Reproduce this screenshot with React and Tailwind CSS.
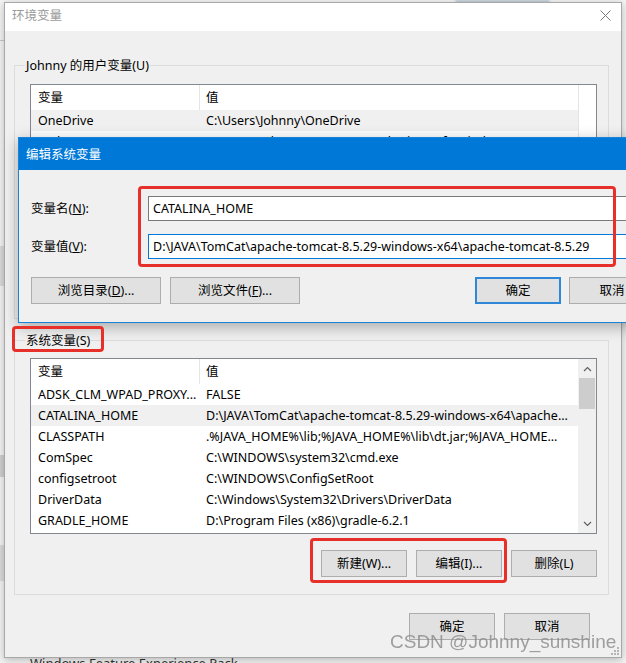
import React from "react";

const sysRows = [
  ["ADSK_CLM_WPAD_PROXY...", "FALSE"],
  ["CATALINA_HOME", "D:\\JAVA\\TomCat\\apache-tomcat-8.5.29-windows-x64\\apache..."],
  ["CLASSPATH", ".%JAVA_HOME%\\lib;%JAVA_HOME%\\lib\\dt.jar;%JAVA_HOME..."],
  ["ComSpec", "C:\\WINDOWS\\system32\\cmd.exe"],
  ["configsetroot", "C:\\WINDOWS\\ConfigSetRoot"],
  ["DriverData", "C:\\Windows\\System32\\Drivers\\DriverData"],
  ["GRADLE_HOME", "D:\\Program Files (x86)\\gradle-6.2.1"],
];

const userRows = [
  ["OneDrive", "C:\\Users\\Johnny\\OneDrive"],
  ["Path", "C:\\Users\\Johnny\\AppData\\Local\\Microsoft\\WindowsApps;C:\\..."],
  ["TEMP", "C:\\Users\\Johnny\\AppData\\Local\\Temp"],
  ["TMP", "C:\\Users\\Johnny\\AppData\\Local\\Temp"],
];

const Chevron = ({ down }) => (
  <svg width="9" height="6" viewBox="0 0 9 6" className={down ? "rotate-180" : ""}>
    <path d="M1 5 4.5 1.5 8 5" fill="none" stroke="#606060" strokeWidth="1.2" />
  </svg>
);

const Btn = ({ children, primary, className = "" }) => (
  <div
    className={`flex h-[27px] w-[86px] items-center justify-center bg-[#e1e1e1] text-[12.5px] text-black ${
      primary ? "border-2 border-[#2f87d8]" : "border border-[#adadad]"
    } ${className}`}
  >
    {children}
  </div>
);

const VarList = ({ rows, selected, heightClass, scroll }) => (
  <div className={`flex overflow-hidden border border-[#828790] bg-white ${heightClass}`}>
    <div className="flex min-w-0 flex-1 flex-col">
      <div className="flex h-[25px] shrink-0 items-center">
        <div className="flex h-full w-[169px] items-center border-r border-[#e5e5e5] pl-[7px]">变量</div>
        <div className="pl-[6px]">值</div>
      </div>
      {rows.map(([k, v], i) => (
        <div
          key={k}
          className={`flex h-[21px] shrink-0 items-center whitespace-nowrap ${
            i === selected ? "bg-[#f0f0f0]" : ""
          }`}
        >
          <div className="w-[169px] overflow-hidden pl-[7px]">{k}</div>
          <div className="min-w-0 flex-1 overflow-hidden pl-[6px]">{v}</div>
        </div>
      ))}
    </div>
    {scroll ? (
      <div className="flex w-[18px] flex-col bg-[#f0f0f0]">
        <div className="flex h-[19px] items-center justify-center">
          <Chevron />
        </div>
        <div className="mx-[1px] h-[31px] bg-[#cdcdcd]" />
        <div className="flex-1" />
        <div className="flex h-[19px] items-center justify-center">
          <Chevron down />
        </div>
      </div>
    ) : (
      <div className="w-[18px] border-l border-[#e5e5e5] bg-white" />
    )}
  </div>
);

const Redbox = ({ className }) => (
  <div className={`pointer-events-none absolute rounded-[4px] border-[3px] border-[#e8302a] ${className}`} />
);

export default function App() {
  return (
    <div className="relative h-[663px] w-[626px] overflow-hidden bg-[#f4f4f4] font-['Noto_Sans','Noto_Sans_CJK_SC',sans-serif] text-[12.5px] leading-[17px] text-black">
      {/* desktop behind the window */}
      <div className="absolute left-0 top-[40px] h-[1px] w-[4px] bg-[#c8c8c8]" />
      <div className="absolute left-0 top-[246px] h-[40px] w-[4px] bg-[#dcdcdc]" />
      <div className="absolute left-0 top-[455px] h-[22px] w-[4px] bg-[#d0d0d0]" />
      <div className="absolute left-0 top-[545px] h-[36px] w-[4px] bg-[#dcdcdc]" />
      <div className="absolute left-[455px] top-0 h-[3px] w-[95px] rounded-full bg-[#b9c7d4] blur-[1px]" />
      <div className="absolute left-[30px] top-[655px] text-[13px] leading-[17px] text-[#333]">
        Windows Feature Experience Pack
      </div>

      {/* 环境变量 window */}
      <div className="absolute left-[4px] top-[2px] flex h-[656px] w-[618px] flex-col border border-[#a8a8a8] bg-[#f0f0f0] shadow-[0_2px_8px_rgba(0,0,0,0.25)]">
        <div className="flex h-[28px] shrink-0 items-start justify-between bg-white pl-[7px] pr-[10px] pt-[4px]">
          <span className="text-[#999]">环境变量</span>
          <svg width="11" height="11" viewBox="0 0 11 11" className="mt-[3px]">
            <path d="M0.5 0.5 10.5 10.5M10.5 0.5 0.5 10.5" stroke="#7a7a7a" strokeWidth="1" />
          </svg>
        </div>

        <fieldset className="ml-[9px] mr-[12px] mt-[26px] h-[262px] border border-[#dcdcdc] pl-[15px] pr-[11px] pt-[10px]">
          <legend className="-ml-[5px] px-[1px]">Johnny 的用户变量(U)</legend>
          <VarList rows={userRows} selected={0} heightClass="h-[190px]" />
        </fieldset>

        <fieldset className="ml-[9px] mr-[12px] mt-[13px] border border-[#dcdcdc] pb-[17px] pl-[15px] pr-[11px] pt-[9px]">
          <legend className="-ml-[5px] px-[1px]">系统变量(S)</legend>
          <VarList rows={sysRows} selected={1} heightClass="h-[176px]" scroll />
          <div className="mt-[16px] flex justify-end gap-[9px]">
            <Btn>新建(W)...</Btn>
            <Btn>编辑(I)...</Btn>
            <Btn>删除(L)</Btn>
          </div>
        </fieldset>

        <div className="mt-[18px] flex justify-end gap-[9px] pr-[31px]">
          <Btn>确定</Btn>
          <Btn>取消</Btn>
        </div>

        <svg width="9" height="9" viewBox="0 0 9 9" className="absolute bottom-[2px] right-[2px]">
          <g fill="#b5b5b5">
            <rect x="7" y="1" width="2" height="2" />
            <rect x="4" y="4" width="2" height="2" />
            <rect x="7" y="4" width="2" height="2" />
            <rect x="1" y="7" width="2" height="2" />
            <rect x="4" y="7" width="2" height="2" />
            <rect x="7" y="7" width="2" height="2" />
          </g>
        </svg>
      </div>

      {/* 编辑系统变量 dialog */}
      <div className="absolute left-[18px] top-[137px] flex h-[186px] w-[650px] flex-col border border-[#1883d7] bg-[#f0f0f0] shadow-[0_4px_14px_rgba(0,0,0,0.3)]">
        <div className="flex h-[32px] shrink-0 items-center bg-[#0078d7] pl-[7px] text-white">编辑系统变量</div>
        <div className="flex flex-col px-[12px] pt-[26px]">
          <div className="flex items-center">
            <div className="w-[117px]">
              变量名(<span className="underline">N</span>):
            </div>
            <div className="flex h-[25px] flex-1 items-center border border-[#7a7a7a] bg-white px-[4px]">CATALINA_HOME</div>
          </div>
          <div className="mt-[13px] flex items-center">
            <div className="w-[117px]">
              变量值(<span className="underline">V</span>):
            </div>
            <div className="flex h-[25px] flex-1 items-center whitespace-nowrap border border-[#0078d7] bg-white px-[4px]">
              D:\JAVA\TomCat\apache-tomcat-8.5.29-windows-x64\apache-tomcat-8.5.29
            </div>
          </div>
          <div className="mt-[18px] flex items-center">
            <Btn className="w-[130px]">
              浏览目录(<span className="underline">D</span>)...
            </Btn>
            <Btn className="ml-[9px] w-[130px]">
              浏览文件(<span className="underline">F</span>)...
            </Btn>
            <div className="flex-1" />
            <Btn primary>确定</Btn>
            <Btn className="ml-[8px]">取消</Btn>
          </div>
        </div>
      </div>

      {/* annotations */}
      <Redbox className="left-[138px] top-[186px] h-[81px] w-[478px]" />
      <Redbox className="left-[12px] top-[326px] h-[26px] w-[92px]" />
      <Redbox className="left-[310px] top-[538px] h-[45px] w-[197px]" />

      <div className="pointer-events-none absolute left-[390px] top-[630px] font-['Liberation_Sans',sans-serif] text-[19px] leading-[24px] text-[#8a8a8a] opacity-80">
        CSDN @Johnny_sunshine
      </div>
    </div>
  );
}
